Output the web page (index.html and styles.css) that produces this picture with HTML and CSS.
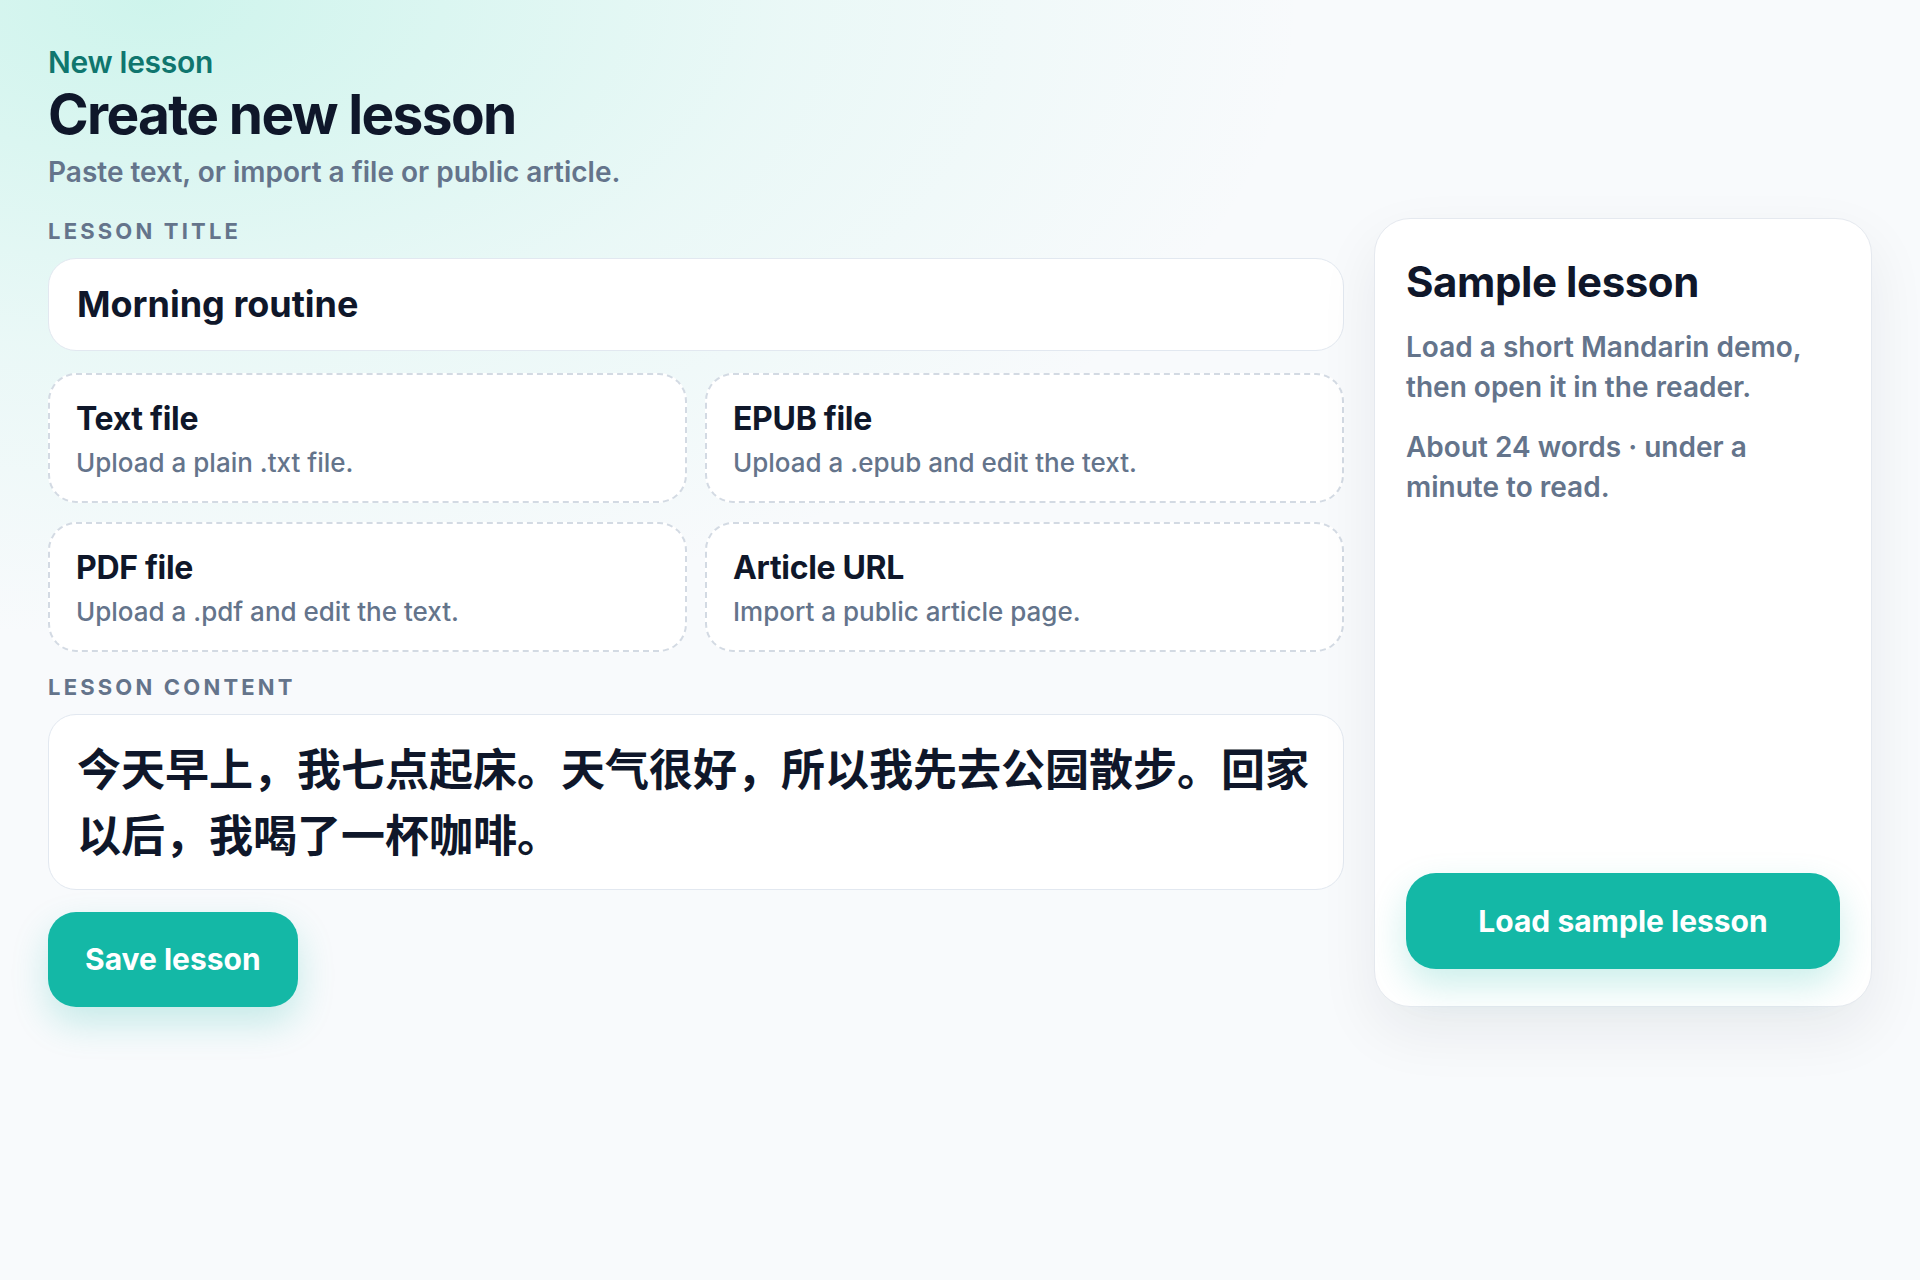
FILE: index.html
```html
<!DOCTYPE html>
<html lang="en">
<head>
<meta charset="utf-8">
<title>Create new lesson</title>
<link rel="stylesheet" href="styles.css">
</head>
<body>
<div class="page">
  <header class="head">
    <p class="eyebrow">New lesson</p>
    <h1 class="title">Create new lesson</h1>
    <p class="sub">Paste text, or import a file or public article.</p>
  </header>
  <div class="layout">
    <main class="form">
      <div class="field">
        <div class="label">Lesson title</div>
        <div class="input">Morning routine</div>
      </div>
      <div class="imports">
        <div class="import">
          <div class="import-title">Text file</div>
          <div class="import-desc">Upload a plain .txt file.</div>
        </div>
        <div class="import">
          <div class="import-title">EPUB file</div>
          <div class="import-desc">Upload a .epub and edit the text.</div>
        </div>
        <div class="import">
          <div class="import-title">PDF file</div>
          <div class="import-desc">Upload a .pdf and edit the text.</div>
        </div>
        <div class="import">
          <div class="import-title">Article URL</div>
          <div class="import-desc">Import a public article page.</div>
        </div>
      </div>
      <div class="field">
        <div class="label">Lesson content</div>
        <div class="textarea">今天早上，我七点起床。天气很好，所以我先去公园散步。回家以后，我喝了一杯咖啡。</div>
      </div>
      <div class="actions">
        <button class="btn">Save lesson</button>
      </div>
    </main>
    <aside class="card">
      <h2 class="card-title">Sample lesson</h2>
      <p class="card-text">Load a short Mandarin demo, then open it in the reader.</p>
      <p class="card-text">About 24 words · under a minute to read.</p>
      <button class="btn btn-block">Load sample lesson</button>
    </aside>
  </div>
</div>
</body>
</html>
```

FILE: styles.css
```css
* { box-sizing: border-box; }

html, body { margin: 0; min-height: 100%; }

body {
  min-height: 1280px;
  font-family: Inter, "Noto Sans", "Noto Sans CJK SC", sans-serif;
  color: #0f172a;
  background-color: #f8fafc;
  background-image:
    radial-gradient(ellipse 1150px 640px at 8% 0%, rgba(110, 231, 200, 0.30), rgba(110, 231, 200, 0.10) 55%, rgba(248, 250, 252, 0) 100%);
  background-repeat: no-repeat;
}

.page {
  padding: 44px 48px 48px;
}

.head {
  display: flex;
  flex-direction: column;
}

.eyebrow {
  margin: 0;
  font-size: 30px;
  line-height: 36px;
  font-weight: 600;
  color: #0f766e;
  letter-spacing: -0.01em;
}

.title {
  margin: 4px 0 0;
  font-size: 55px;
  line-height: 60px;
  font-weight: 700;
  letter-spacing: -0.03em;
  color: #0f172a;
}

.sub {
  margin: 10px 0 0;
  font-size: 28px;
  line-height: 36px;
  font-weight: 600;
  color: #64748b;
}

.layout {
  margin-top: 28px;
  display: grid;
  grid-template-columns: minmax(0, 1fr) 498px;
  gap: 30px;
  align-items: stretch;
}

.form {
  display: flex;
  flex-direction: column;
  gap: 22px;
}

.field {
  display: flex;
  flex-direction: column;
  gap: 14px;
}

.label {
  font-size: 22px;
  line-height: 1.2;
  font-weight: 700;
  letter-spacing: 0.145em;
  text-transform: uppercase;
  color: #64748b;
}

.input {
  background: #ffffff;
  border: 1px solid #e2e8f0;
  border-radius: 28px;
  padding: 25px 28px;
  font-size: 36px;
  line-height: 41px;
  font-weight: 700;
  color: #0f172a;
}

.imports {
  display: grid;
  grid-template-columns: 1fr 1fr;
  gap: 19px 18px;
}

.import {
  background: #ffffff;
  border: 2px dashed #d3dae3;
  border-radius: 28px;
  padding: 25px 26px 20px;
  display: flex;
  flex-direction: column;
  gap: 6px;
}

.import-title {
  font-size: 32px;
  line-height: 1.2;
  font-weight: 700;
  letter-spacing: -0.01em;
  color: #0f172a;
}

.import-desc {
  font-size: 26px;
  line-height: 1.4;
  font-weight: 500;
  color: #64748b;
}

.textarea {
  background: #ffffff;
  border: 1px solid #e2e8f0;
  border-radius: 28px;
  padding: 22px 28px 20px;
  font-family: Inter, "Noto Sans CJK SC", sans-serif;
  font-size: 44px;
  line-height: 66px;
  font-weight: 700;
  color: #0f172a;
}

.actions {
  display: flex;
}

.btn {
  appearance: none;
  border: 0;
  margin: 0;
  font-family: Inter, "Noto Sans", sans-serif;
  font-size: 30px;
  line-height: 36px;
  font-weight: 700;
  color: #ffffff;
  background: #14b8a6;
  border-radius: 28px;
  padding: 29px 37px 30px;
  box-shadow: 0 16px 36px rgba(20, 184, 166, 0.22);
  cursor: pointer;
}

.card {
  background: #ffffff;
  border: 1px solid #e5e9ef;
  border-radius: 36px;
  padding: 38px 31px 37px;
  display: flex;
  flex-direction: column;
  box-shadow: 0 24px 60px rgba(15, 23, 42, 0.07);
}

.card-title {
  margin: 0 0 20px;
  font-size: 42px;
  line-height: 50px;
  font-weight: 700;
  letter-spacing: -0.01em;
  color: #0f172a;
}

.card-text {
  margin: 0 0 20px;
  font-size: 28px;
  line-height: 40px;
  font-weight: 600;
  color: #64748b;
}

.btn-block {
  margin-top: auto;
  width: 100%;
  border-radius: 30px;
  padding: 30px 20px;
}
```
